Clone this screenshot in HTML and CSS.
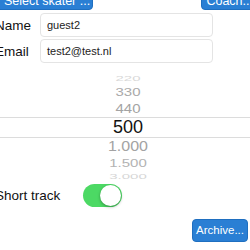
FILE: index.html
```html
<!DOCTYPE html>
<html>
<head>
<meta charset="utf-8">
<link rel="stylesheet" href="styles.css">
</head>
<body>
<div class="page">
  <div class="top">
    <button class="btn btn-select">Select skater ...</button>
    <button class="btn btn-coach">Coach...</button>
  </div>
  <div class="form">
    <div class="row">
      <label class="lbl">Name</label>
      <div class="input">guest2</div>
    </div>
    <div class="row">
      <label class="lbl">Email</label>
      <div class="input">test2@test.nl</div>
    </div>
  </div>
  <div class="picker">
    <div class="item i220">220</div>
    <div class="item i330">330</div>
    <div class="item i440">440</div>
    <div class="item sel">500</div>
    <div class="item i1000">1.000</div>
    <div class="item i1500">1.500</div>
    <div class="item i3000">3.000</div>
  </div>
  <div class="switch-row">
    <span class="lbl lbl-switch">Short track</span>
    <span class="switch"><span class="knob"></span></span>
  </div>
  <div class="bottom">
    <button class="btn btn-archive">Archive...</button>
  </div>
</div>
</body>
</html>
```

FILE: styles.css
```css
html, body {
  margin: 0;
  padding: 0;
  background: #fff;
  overflow: hidden;
  width: 250px;
  height: 250px;
}
body {
  font-family: "Liberation Sans", Arial, sans-serif;
  font-size: 12px;
  color: #111;
}
.page {
  margin-top: -13px;
}
.top {
  display: flex;
  justify-content: space-between;
  height: 23px;
}
.btn {
  font-family: "Liberation Sans", Arial, sans-serif;
  font-size: 12px;
  color: #fff;
  background: #2a7fd4;
  border: 1px solid #1f6fc0;
  border-radius: 4px;
  height: 23px;
  line-height: 21px;
  padding: 0 7px;
  white-space: nowrap;
}
.btn-select {
  margin-left: -4px;
  width: 97px;
  line-height: 26px;
  font-size: 12.5px;
}
.btn-coach {
  margin-right: -8px;
  padding: 0 4px;
  line-height: 26px;
  font-size: 12.5px;
}
.form {
  margin-top: 3px;
  display: flex;
  flex-direction: column;
  gap: 2px;
}
.row {
  display: flex;
  align-items: center;
  height: 24px;
}
.lbl {
  width: 45px;
  margin-left: -5px;
  font-size: 13.5px;
  color: #111;
  flex: none;
}
.input {
  box-sizing: border-box;
  width: 173px;
  height: 24px;
  border: 1px solid #e4e4e4;
  border-radius: 4px;
  padding-left: 6px;
  font-size: 11px;
  line-height: 22px;
  color: #222;
}
.picker {
  margin-top: 8px;
  display: flex;
  flex-direction: column;
  align-items: stretch;
}
.item {
  text-align: center;
  padding-left: 6px;
  color: #a6a6a6;
  font-size: 15px;
  display: flex;
  align-items: center;
  justify-content: center;
}
.i220 { height: 14px; color: #d8d8d8; transform: scaleY(0.45); }
.i330 { height: 15px; color: #a9a9a9; transform: scaleY(0.72); }
.i440 { height: 17px; color: #a3a3a3; transform: scaleY(0.88); }
.sel {
  height: 19px;
  color: #111;
  font-size: 18px;
  border-top: 1px solid #dcdcdc;
  border-bottom: 1px solid #dcdcdc;
}
.i1000 { height: 17px; color: #a3a3a3; font-size: 16px; transform: scaleY(0.9); }
.i1500 { height: 15px; color: #b3b3b3; transform: scaleY(0.75); }
.i3000 { height: 12px; color: #d6d6d6; transform: scaleY(0.45); }
.switch-row {
  display: flex;
  align-items: center;
  height: 26px;
}
.lbl-switch {
  width: 88px;
}
.switch {
  position: relative;
  flex: none;
  width: 39px;
  height: 23px;
  border-radius: 12px;
  background: #4cd964;
}
.knob {
  position: absolute;
  right: 1px;
  top: 1px;
  width: 21px;
  height: 21px;
  border-radius: 50%;
  background: #fff;
  box-shadow: 0 1px 3px rgba(0,0,0,0.35);
}
.bottom {
  display: flex;
  justify-content: flex-end;
  margin-top: 11px;
  padding-right: 2px;
}
.btn-archive {
  padding: 0 3px;
  font-size: 11.5px;
}
```
